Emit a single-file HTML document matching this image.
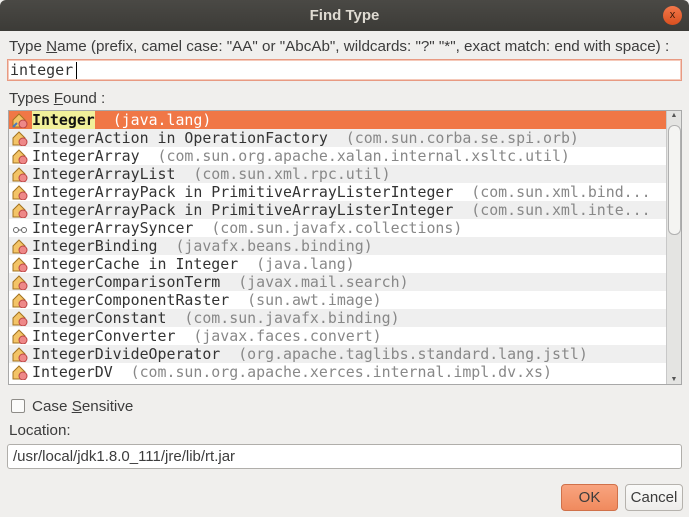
<!DOCTYPE html>
<html><head><style>
body{margin:0;width:689px;height:517px;background:#f0efed;font-family:"Liberation Sans",sans-serif;font-size:15.2px;color:#3c3c3c;position:relative;overflow:hidden}
.tb{position:absolute;left:0;top:0;width:689px;height:31px;background:linear-gradient(#4a4945,#3c3b37);color:#dfdbd2;font-weight:bold;font-size:15px;text-align:center;line-height:31px;border-radius:6px 6px 0 0}
.x{position:absolute;right:7px;top:6px;width:19px;height:19px;border-radius:50%;background:linear-gradient(#f3774a,#d9501f);color:#3a1a0a;font-size:11px;line-height:18px;text-align:center;font-weight:normal}
.lab{position:absolute;left:9px}
.inp{position:absolute;left:7px;top:59px;width:673px;height:20px;background:#fff;border:1px solid #e89a82;box-shadow:inset 0 0 0 1px #f5c9ba}
.list{position:absolute;left:8px;top:110px;width:672px;height:273px;border:1px solid #a8a8a8;background:#fff;overflow:hidden}
.row{height:18px;line-height:19px;font-family:"DejaVu Sans Mono",monospace;font-size:14.9px;color:#333;white-space:pre;position:relative;padding-left:23px;width:634px}
.row:nth-child(even){background:#efefef}
.row i{font-style:normal;color:#888}
.sel{background:#f07746!important}
.sel b{background:#f1f09a;color:#111}
.sel i{color:#fff}
.ic{position:absolute;left:3px;top:2px;width:16px;height:15px}
.sb{position:absolute;left:657px;top:0;width:14px;height:273px;background:#e4e4e2;border-left:1px solid #c8c8c8}
.th{position:absolute;left:1px;top:14px;width:11px;height:108px;background:#f4f4f2;border:1px solid #b0b0b0;border-radius:6px}
.btn{position:absolute;top:484px;height:25px;border:1px solid #b5b2ad;border-radius:4px;text-align:center;line-height:25px;font-size:15px}
</style></head><body>
<div class="tb">Find Type<div class="x">x</div></div>
<div class="lab" style="top:38px">Type <u>N</u>ame (prefix, camel case: "AA" or "AbcAb", wildcards: "?" "*", exact match: end with space) :</div>
<div class="inp"><span style="font-family:'DejaVu Sans Mono',monospace;font-size:15px;position:absolute;left:2px;top:1px;color:#333">integer</span><span style="position:absolute;left:68px;top:2px;width:1px;height:17px;background:#000"></span></div>
<div class="lab" style="top:90px">Types <u>F</u>ound :</div>
<div class="list">
<div class="row sel"><svg class="ic" viewBox="0 0 16 15"><path d="M1 14V7L7 1l6 6v7z" fill="#f3c467" stroke="#a37320"/><circle cx="11" cy="11" r="4" fill="#e88" stroke="#b44"/><path d="M1 14L5 10" stroke="#4a7bbd" stroke-width="2"/></svg><b>Integer</b>  <i>(java.lang)</i></div>
<div class="row"><svg class="ic" viewBox="0 0 16 15"><path d="M1 14V7L7 1l6 6v7z" fill="#f3c467" stroke="#a37320"/><circle cx="11" cy="11" r="4" fill="#e88" stroke="#b44"/></svg>IntegerAction in OperationFactory  <i>(com.sun.corba.se.spi.orb)</i></div>
<div class="row"><svg class="ic" viewBox="0 0 16 15"><path d="M1 14V7L7 1l6 6v7z" fill="#f3c467" stroke="#a37320"/><circle cx="11" cy="11" r="4" fill="#e88" stroke="#b44"/></svg>IntegerArray  <i>(com.sun.org.apache.xalan.internal.xsltc.util)</i></div>
<div class="row"><svg class="ic" viewBox="0 0 16 15"><path d="M1 14V7L7 1l6 6v7z" fill="#f3c467" stroke="#a37320"/><circle cx="11" cy="11" r="4" fill="#e88" stroke="#b44"/></svg>IntegerArrayList  <i>(com.sun.xml.rpc.util)</i></div>
<div class="row"><svg class="ic" viewBox="0 0 16 15"><path d="M1 14V7L7 1l6 6v7z" fill="#f3c467" stroke="#a37320"/><circle cx="11" cy="11" r="4" fill="#e88" stroke="#b44"/></svg>IntegerArrayPack in PrimitiveArrayListerInteger  <i>(com.sun.xml.bind...</i></div>
<div class="row"><svg class="ic" viewBox="0 0 16 15"><path d="M1 14V7L7 1l6 6v7z" fill="#f3c467" stroke="#a37320"/><circle cx="11" cy="11" r="4" fill="#e88" stroke="#b44"/></svg>IntegerArrayPack in PrimitiveArrayListerInteger  <i>(com.sun.xml.inte...</i></div>
<div class="row"><svg class="ic" viewBox="0 0 16 15"><circle cx="4" cy="9" r="2.5" fill="none" stroke="#666"/><circle cx="12" cy="9" r="2.5" fill="none" stroke="#666"/><path d="M6.5 9h3" stroke="#666"/></svg>IntegerArraySyncer  <i>(com.sun.javafx.collections)</i></div>
<div class="row"><svg class="ic" viewBox="0 0 16 15"><path d="M1 14V7L7 1l6 6v7z" fill="#f3c467" stroke="#a37320"/><circle cx="11" cy="11" r="4" fill="#e88" stroke="#b44"/></svg>IntegerBinding  <i>(javafx.beans.binding)</i></div>
<div class="row"><svg class="ic" viewBox="0 0 16 15"><path d="M1 14V7L7 1l6 6v7z" fill="#f3c467" stroke="#a37320"/><circle cx="11" cy="11" r="4" fill="#e88" stroke="#b44"/></svg>IntegerCache in Integer  <i>(java.lang)</i></div>
<div class="row"><svg class="ic" viewBox="0 0 16 15"><path d="M1 14V7L7 1l6 6v7z" fill="#f3c467" stroke="#a37320"/><circle cx="11" cy="11" r="4" fill="#e88" stroke="#b44"/></svg>IntegerComparisonTerm  <i>(javax.mail.search)</i></div>
<div class="row"><svg class="ic" viewBox="0 0 16 15"><path d="M1 14V7L7 1l6 6v7z" fill="#f3c467" stroke="#a37320"/><circle cx="11" cy="11" r="4" fill="#e88" stroke="#b44"/></svg>IntegerComponentRaster  <i>(sun.awt.image)</i></div>
<div class="row"><svg class="ic" viewBox="0 0 16 15"><path d="M1 14V7L7 1l6 6v7z" fill="#f3c467" stroke="#a37320"/><circle cx="11" cy="11" r="4" fill="#e88" stroke="#b44"/></svg>IntegerConstant  <i>(com.sun.javafx.binding)</i></div>
<div class="row"><svg class="ic" viewBox="0 0 16 15"><path d="M1 14V7L7 1l6 6v7z" fill="#f3c467" stroke="#a37320"/><circle cx="11" cy="11" r="4" fill="#e88" stroke="#b44"/></svg>IntegerConverter  <i>(javax.faces.convert)</i></div>
<div class="row"><svg class="ic" viewBox="0 0 16 15"><path d="M1 14V7L7 1l6 6v7z" fill="#f3c467" stroke="#a37320"/><circle cx="11" cy="11" r="4" fill="#e88" stroke="#b44"/></svg>IntegerDivideOperator  <i>(org.apache.taglibs.standard.lang.jstl)</i></div>
<div class="row"><svg class="ic" viewBox="0 0 16 15"><path d="M1 14V7L7 1l6 6v7z" fill="#f3c467" stroke="#a37320"/><circle cx="11" cy="11" r="4" fill="#e88" stroke="#b44"/></svg>IntegerDV  <i>(com.sun.org.apache.xerces.internal.impl.dv.xs)</i></div>
<div class="sb"><div style="font-size:7px;text-align:center;color:#555;margin-top:1px">▲</div><div class="th"></div><div style="position:absolute;bottom:1px;width:14px;font-size:7px;text-align:center;color:#555">▼</div></div>
</div>
<div style="position:absolute;left:11px;top:399px;width:12px;height:12px;border:1px solid #8e8c88;border-radius:2px;background:#fbfbfa"></div>
<div class="lab" style="left:32px;top:398px">Case <u>S</u>ensitive</div>
<div class="lab" style="top:422px">Location:</div>
<div style="position:absolute;left:7px;top:444px;width:668px;height:23px;background:#fff;border:1px solid #b0aeaa;border-radius:3px;line-height:23px;padding-left:5px;font-size:15px">/usr/local/jdk1.8.0_111/jre/lib/rt.jar</div>
<div class="btn" style="left:561px;width:55px;background:linear-gradient(#f8a47f,#f08a5e);border-color:#d0714a">OK</div>
<div class="btn" style="left:625px;width:56px;background:linear-gradient(#fafaf9,#eeedeb)">Cancel</div>
</body></html>
